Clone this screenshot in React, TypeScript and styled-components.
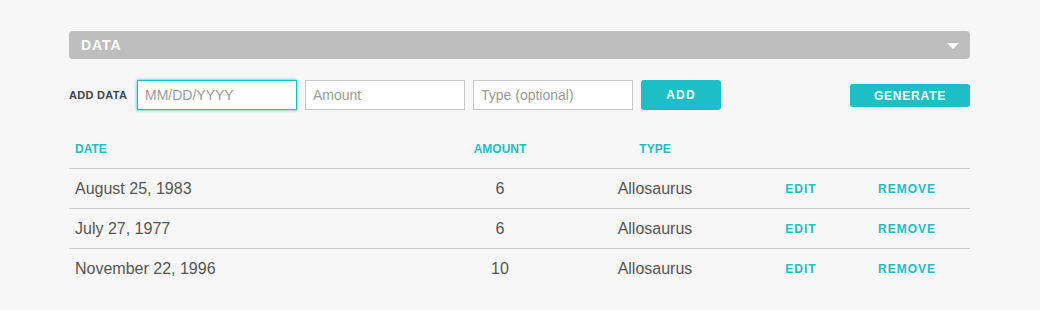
import styled, { createGlobalStyle } from "styled-components";

const TEAL = "#1cbfc6";

const GlobalStyle = createGlobalStyle`
    body {
        margin: 0;
        background: #f7f7f7;
        font-family: "Liberation Sans", Arial, sans-serif;
        color: #555;
    }
`

type Entry = { date: string; amount: number; type: string };

const entries: Entry[] = [
    { date: "August 25, 1983", amount: 6, type: "Allosaurus" },
    { date: "July 27, 1977", amount: 6, type: "Allosaurus" },
    { date: "November 22, 1996", amount: 10, type: "Allosaurus" },
];

const App = () => {
    return (
        <Page>
            <GlobalStyle />
            <Panel>
                <Header>
                    <HeaderTitle>DATA</HeaderTitle>
                    <Caret />
                </Header>
                <AddRow>
                    <AddLabel>ADD DATA</AddLabel>
                    <Input $focused placeholder="MM/DD/YYYY" />
                    <Input placeholder="Amount" />
                    <Input placeholder="Type (optional)" />
                    <AddButton>ADD</AddButton>
                    <GenerateButton>GENERATE</GenerateButton>
                </AddRow>
                <Table>
                    <HeadRow>
                        <HeadCell $align="left">DATE</HeadCell>
                        <HeadCell>AMOUNT</HeadCell>
                        <HeadCell>TYPE</HeadCell>
                        <HeadCell />
                        <HeadCell />
                        <HeadCell />
                    </HeadRow>
                    {entries.map((e, i) => (
                        <Row key={i}>
                            <Cell $align="left">{e.date}</Cell>
                            <Cell>{e.amount}</Cell>
                            <Cell>{e.type}</Cell>
                            <ActionCell>EDIT</ActionCell>
                            <ActionCell>REMOVE</ActionCell>
                            <Cell />
                        </Row>
                    ))}
                </Table>
            </Panel>
        </Page>
    )
}

export default App;

const Page = styled.div`
    width: 1040px;
    height: 310px;
    padding: 31px 0 0 69px;
    box-sizing: border-box;
`

const Panel = styled.div`
    width: 901px;
`

const Header = styled.div`
    height: 28px;
    background: #bebebe;
    border-radius: 4px;
    display: flex;
    align-items: center;
    justify-content: space-between;
    padding: 0 11px 0 12px;
`

const HeaderTitle = styled.span`
    color: #fff;
    font-weight: bold;
    font-size: 14px;
    letter-spacing: 0.9px;
`

const Caret = styled.span`
    width: 0;
    height: 0;
    border-left: 6px solid transparent;
    border-right: 6px solid transparent;
    border-top: 6px solid #fff;
    margin-top: 2px;
`

const AddRow = styled.div`
    display: flex;
    align-items: center;
    margin-top: 21px;
    height: 30px;
`

const AddLabel = styled.span`
    font-size: 11px;
    font-weight: bold;
    color: #444;
    letter-spacing: 0.3px;
    width: 68px;
`

const Input = styled.input<{ $focused?: boolean }>`
    width: 160px;
    height: 30px;
    box-sizing: border-box;
    margin-right: 8px;
    border: 1px solid ${p => p.$focused ? TEAL : "#c8c8c8"};
    box-shadow: ${p => p.$focused ? `0 0 3px ${TEAL}` : "none"};
    background: #fff;
    outline: none;
    padding: 0 7px;
    font-family: "Liberation Sans", Arial, sans-serif;
    font-size: 14px;
    color: #555;
    &::placeholder {
        color: #9a9a9a;
    }
`

const AddButton = styled.button`
    width: 80px;
    height: 30px;
    border: none;
    border-radius: 3px;
    background: ${TEAL};
    color: #fff;
    font-family: "Liberation Sans", Arial, sans-serif;
    font-weight: bold;
    font-size: 12px;
    letter-spacing: 1.1px;
    padding: 0;
`

const GenerateButton = styled.button`
    margin-left: auto;
    width: 120px;
    height: 23px;
    border: none;
    border-radius: 3px;
    background: ${TEAL};
    color: #fff;
    font-family: "Liberation Sans", Arial, sans-serif;
    font-weight: bold;
    font-size: 12px;
    letter-spacing: 0.8px;
    padding: 0;
    align-self: flex-end;
    margin-bottom: 3px;
`

const Table = styled.div`
    margin-top: 19px;
`

const columns = "361px 140px 170px 122px 90px 1fr";

const HeadRow = styled.div`
    display: grid;
    grid-template-columns: ${columns};
    height: 39px;
    align-items: center;
    border-bottom: 1px solid #cacaca;
`

const Row = styled.div`
    display: grid;
    grid-template-columns: ${columns};
    height: 39px;
    align-items: center;
    border-bottom: 1px solid #cacaca;
    &:last-child {
        border-bottom: none;
    }
`

const HeadCell = styled.div<{ $align?: string }>`
    text-align: ${p => p.$align || "center"};
    padding-left: ${p => p.$align === "left" ? "6px" : "0"};
    color: ${TEAL};
    font-weight: bold;
    font-size: 12px;
`

const Cell = styled.div<{ $align?: string }>`
    text-align: ${p => p.$align || "center"};
    padding-left: ${p => p.$align === "left" ? "6px" : "0"};
    font-size: 16px;
    color: #555;
`

const ActionCell = styled.div`
    text-align: center;
    color: ${TEAL};
    font-weight: bold;
    font-size: 12px;
    letter-spacing: 1px;
`
